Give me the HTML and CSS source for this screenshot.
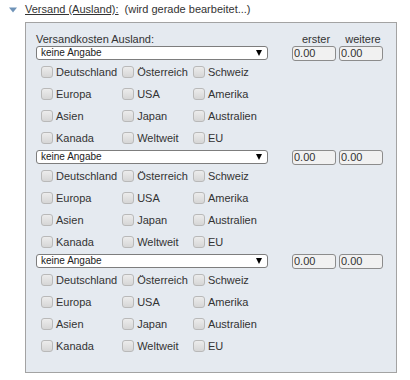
FILE: index.html
```html
<!DOCTYPE html>
<html lang="de">
  <head>
    <meta charset="UTF-8" />
    <title>Versand (Ausland)</title>
    <link rel="stylesheet" href="styles.css">
  </head>
  <body>
    <div class="section-head">
      <svg class="toggle" width="8" height="6" viewBox="0 0 8 6">
        <path d="M0 0.5 L8 0.5 L4 5.5 Z" fill="#6f93b8" />
      </svg>
      <a href="#" class="section-title">Versand (Ausland):</a>
      <span class="status">(wird gerade bearbeitet...)</span>
    </div>

    <div class="panel">
      <div class="col-head">
        <span class="col-label">Versandkosten Ausland:</span>
        <span class="col-price">erster</span>
        <span class="col-price">weitere</span>
      </div>

      <!-- Zone 1 -->
      <div class="zone-row">
        <span class="select-wrap">
          <select class="zone-select"><option>keine Angabe</option></select>
        </span>
        <input class="price" type="text" value="0.00">
        <input class="price" type="text" value="0.00">
      </div>
      <div class="countries">
        <label><input type="checkbox">Deutschland</label>
        <label><input type="checkbox">Österreich</label>
        <label><input type="checkbox">Schweiz</label>
        <label><input type="checkbox">Europa</label>
        <label><input type="checkbox">USA</label>
        <label><input type="checkbox">Amerika</label>
        <label><input type="checkbox">Asien</label>
        <label><input type="checkbox">Japan</label>
        <label><input type="checkbox">Australien</label>
        <label><input type="checkbox">Kanada</label>
        <label><input type="checkbox">Weltweit</label>
        <label><input type="checkbox">EU</label>
      </div>

      <!-- Zone 2 -->
      <div class="zone-row">
        <span class="select-wrap">
          <select class="zone-select"><option>keine Angabe</option></select>
        </span>
        <input class="price" type="text" value="0.00">
        <input class="price" type="text" value="0.00">
      </div>
      <div class="countries">
        <label><input type="checkbox">Deutschland</label>
        <label><input type="checkbox">Österreich</label>
        <label><input type="checkbox">Schweiz</label>
        <label><input type="checkbox">Europa</label>
        <label><input type="checkbox">USA</label>
        <label><input type="checkbox">Amerika</label>
        <label><input type="checkbox">Asien</label>
        <label><input type="checkbox">Japan</label>
        <label><input type="checkbox">Australien</label>
        <label><input type="checkbox">Kanada</label>
        <label><input type="checkbox">Weltweit</label>
        <label><input type="checkbox">EU</label>
      </div>

      <!-- Zone 3 -->
      <div class="zone-row">
        <span class="select-wrap">
          <select class="zone-select"><option>keine Angabe</option></select>
        </span>
        <input class="price" type="text" value="0.00">
        <input class="price" type="text" value="0.00">
      </div>
      <div class="countries">
        <label><input type="checkbox">Deutschland</label>
        <label><input type="checkbox">Österreich</label>
        <label><input type="checkbox">Schweiz</label>
        <label><input type="checkbox">Europa</label>
        <label><input type="checkbox">USA</label>
        <label><input type="checkbox">Amerika</label>
        <label><input type="checkbox">Asien</label>
        <label><input type="checkbox">Japan</label>
        <label><input type="checkbox">Australien</label>
        <label><input type="checkbox">Kanada</label>
        <label><input type="checkbox">Weltweit</label>
        <label><input type="checkbox">EU</label>
      </div>
    </div>
  </body>
</html>
```

FILE: styles.css
```css
body {
  margin: 0;
  font-family: "Liberation Sans", Arial, sans-serif;
  font-size: 11px;
  line-height: 13px;
  color: #333;
  background-color: #fff;
}

.section-head {
  display: flex;
  align-items: center;
  padding: 3px 0 0 9px;
  height: 13px;
}

.toggle {
  margin-right: 8px;
}

.section-title {
  color: #333;
  text-decoration: underline;
}

.status {
  margin-left: 6px;
}

.panel {
  box-sizing: border-box;
  width: 372px;
  margin: 6px 0 0 25px;
  padding: 10px 10px 15px 10px;
  border: 1px solid #a3a3a3;
  background-color: #e5eaf0;
}

.col-head {
  display: flex;
  gap: 3px;
  line-height: 12px;
}

.col-label {
  width: 255px;
}

.col-price {
  width: 44px;
  text-align: center;
}

.zone-row {
  display: flex;
  align-items: center;
  height: 16px;
}

.select-wrap {
  position: relative;
  display: block;
  width: 234px;
  height: 14px;
  margin-right: 24px;
}

.select-wrap::after {
  content: "";
  position: absolute;
  right: 6px;
  top: 4px;
  border-left: 3.5px solid transparent;
  border-right: 3.5px solid transparent;
  border-top: 6px solid #000;
  pointer-events: none;
}

.zone-select {
  appearance: none;
  box-sizing: border-box;
  width: 100%;
  height: 14px;
  margin: 0;
  padding: 0 0 0 4px;
  border: 1px solid #7d7d7d;
  border-radius: 3px;
  background-color: #fff;
  font-family: "Liberation Sans", Arial, sans-serif;
  font-size: 10px;
  line-height: 12px;
  color: #222;
}

.price {
  box-sizing: border-box;
  width: 44px;
  height: 15px;
  margin: 0 3px 0 0;
  padding: 0 0 0 1px;
  border: 1px solid #8c8c8c;
  border-radius: 3px;
  background-color: #f1f1f1;
  font-family: "Liberation Sans", Arial, sans-serif;
  font-size: 11px;
  color: #333;
}

.countries {
  display: grid;
  grid-template-columns: repeat(3, max-content);
  grid-auto-rows: 22px;
  column-gap: 5px;
  padding-left: 5px;
}

.countries label {
  display: flex;
  align-items: center;
}

.countries input {
  appearance: none;
  box-sizing: border-box;
  width: 12px;
  height: 12px;
  margin: 0 3px 0 0;
  border: 1px solid #b9b9b9;
  border-radius: 3px;
  background: linear-gradient(#ececec, #d6d6d6);
}
```
